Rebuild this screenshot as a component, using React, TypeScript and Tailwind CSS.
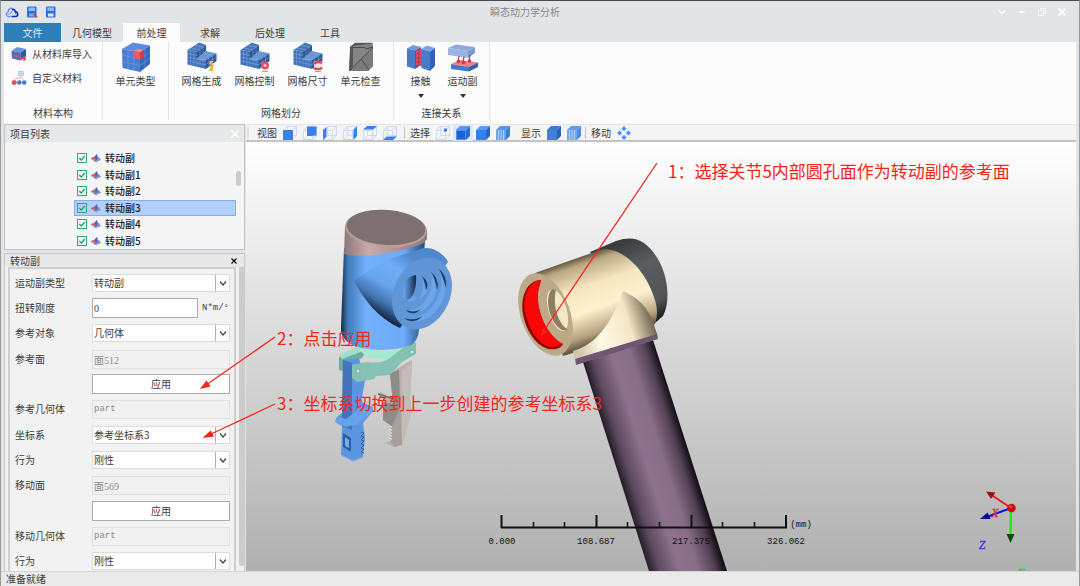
import { useState } from 'react';
import type { ReactNode } from 'react';

const menuTabs = ['几何模型', '前处理', '求解', '后处理', '工具'];
const joints = ['转动副', '转动副1', '转动副2', '转动副3', '转动副4', '转动副5'];

/* ---------- icons ---------- */

function CloudIcon() {
  return (
    <svg viewBox="0 0 14 12" className="h-3 w-[14px]" fill="none" strokeLinecap="round">
      <path d="M5 10.500H3.500C.6 10.200.6 6.800 3 6.300 3.200 1.800 7.800.8 9 4.200L11 8" stroke="#5b8bee" strokeWidth="1.300" />
      <path d="M7 10.500H10.500C13.600 10.200 13.400 6.200 10.600 5.800 10 3.800 8.500 3 7.500 3.600" stroke="#1d2f9c" strokeWidth="1.500" />
      <path d="M4 8.300 6 7M6 7 7 5" stroke="#5b8bee" strokeWidth="1" />
    </svg>
  );
}

function SaveIcon({ badge = false }: { badge?: boolean }) {
  return (
    <svg viewBox="0 0 12 12" className="size-3">
      <rect x="1" y=".5" width="9.500" height="11" rx="1" fill="#2f6ddc" />
      <rect x="2.500" y="1.500" width="6.500" height="3.500" fill="#8fb8f8" />
      <rect x="3" y="7.500" width="5.500" height="3" fill={badge ? '#7fa9f2' : '#dbe8ff'} />
      {badge && <path d="M7.500 8 11 11.300" stroke="#e2434f" strokeWidth="2" fill="none" />}
    </svg>
  );
}

function ImportIcon() {
  return (
    <svg viewBox="0 0 16 16" className="size-4">
      <path d="M.5 5 6 1 15 3 9.500 6.500Z" fill="#6d93da" />
      <path d="M.5 5 9.500 6.500V14.500L1 12.500Z" fill="#456fc0" />
      <path d="M9.500 6.500 15 3V10.500L9.500 14.500Z" fill="#2f57a5" />
      <path d="M2.500 8.500 7.500 9.500V12L2.500 11.300Z" fill="#e2505e" />
      <path d="M9 12.500h5M12.500 10.500l2 2-2 2.500" stroke="#e2505e" strokeWidth="1.400" fill="none" />
    </svg>
  );
}

function CustomIcon() {
  return (
    <svg viewBox="0 0 16 16" className="size-4">
      <path d="M7.500 1.500h5v4h-5zM10 2v3M8 3.500h4" stroke="#9cc4ee" fill="#e2f0fd" strokeWidth=".8" />
      <path d="M10 6 8.500 9M10 7l3 2.500M8 8 3.500 9.500" stroke="#e39aa2" strokeWidth=".8" />
      <circle cx="3.200" cy="12.500" r="2.500" fill="#d95866" />
      <circle cx="8.300" cy="12.500" r="2.300" fill="#4b7bcd" />
      <circle cx="13.200" cy="12.500" r="2.300" fill="#4b7bcd" />
    </svg>
  );
}

function UnitIcon() {
  return (
    <svg viewBox="0 0 30 30" className="size-[30px]">
      <path d="M1 7 12 .5 29 3.500 19 10Z" fill="#5d8bdb" />
      <path d="M1 7 19 10V30L1.500 26Z" fill="#4c7dd0" />
      <path d="M19 10 29 3.500V22L19 30Z" fill="#3a67b6" />
      <path d="M7 8V27M13 9V28.500M1 13 19 17M1 19.500 19 23.500M19 17 29 10M19 23.500 29 16M24 7v19" stroke="#7ba3e4" strokeWidth=".5" fill="none" />
      <path d="M13 9 17 7 23 8 19 10.300Z" fill="#f58a8f" />
      <path d="M13 9 19 10.300V17.500L13 16.500Z" fill="#ee5662" />
      <path d="M19 10.300 23 8V14.500L19 17.500Z" fill="#cf3b49" />
    </svg>
  );
}

function MeshIcon({ children }: { children: ReactNode }) {
  return (
    <svg viewBox="0 0 30 30" className="size-[30px]">
      <path d="M.5 8 12 .5 19 3 10 9.500Z" fill="#4677bb" />
      <path d="M.5 8 10 9.500V17L19 18V27L.5 22.500Z" fill="#3d6eb6" />
      <path d="M10 9.500 19 3V9L10 17Z" fill="#2c5598" />
      <path d="M10 17 19 9 29.500 11.500 19 18Z" fill="#6893d0" />
      <path d="M19 18 29.500 11.500V19L19 27Z" fill="#2d5699" />
      <path d="M3.600 8.500v14.500M6.800 9v15M10 17v7.500M13 17.300v8M16 17.600v8.500M.5 11.600l9.500 1.900M.5 15.200l9.500 1.900 9 2M.5 18.800l18.500 4.200M13 7.500v7M16 5.300v6M22 16.500v8M25.500 14v8M13 17.300l9-7.300M16 17.600l10-7M19 22.500l10.500-7.500M4 6l9 1.800M8 3.300l9 2" stroke="#8db2e6" strokeWidth=".5" fill="none" />
      {children}
    </svg>
  );
}

function CheckUnitIcon() {
  return (
    <svg viewBox="0 0 30 30" className="size-[30px]">
      <path d="M4 5 9 .8H27L22 5Z" fill="#555" />
      <path d="M5 4 27 1.500V24L22 29H3Z" fill="#858585" />
      <path d="M4 5 7 2.500V24L3 29Z" fill="#555" />
      <path d="M3 29 27 6V24L22 29Z" fill="#7b7b7b" />
      <path d="M3 29 27 5.500M15 17 23 28M7 5.500H19L20 7 27 5" stroke="#4a4a4a" strokeWidth="1" fill="none" />
    </svg>
  );
}

function ContactIcon() {
  return (
    <svg viewBox="0 0 30 30" className="size-[30px]">
      <path d="M1 6.500 7 3 15 5 9 8.500Z" fill="#7099dd" />
      <path d="M1 6.500 9 8.500V27L1 24.500Z" fill="#4a79c9" />
      <path d="M9 8.500 15 5V23L9 27Z" fill="#3563b0" />
      <path d="M10 8h8v17l-8-2Z" fill="#d64c5d" />
      <path d="M12.500 8v15.500M10 12h7M10 16h7M10 20h7" stroke="#b03347" strokeWidth=".7" />
      <path d="M15 7 21 3.500 29 6 24 9.500Z" fill="#7ba4e8" />
      <path d="M15 7 24 9.500V29L15.500 26Z" fill="#4a7acb" />
      <path d="M24 9.500 29 6V24L24 29Z" fill="#3461b1" />
    </svg>
  );
}

function MotionIcon() {
  return (
    <svg viewBox="0 0 30 30" className="size-[30px]">
      <path d="M0 6 8 2.500 27 5 20 9Z" fill="#8ea9dd" />
      <path d="M0 6 20 9V16L0 13Z" fill="#9db1e2" />
      <path d="M20 9 27 5V11L20 16Z" fill="#7d99d2" />
      <path d="M3 22 12 18 30 20.500 21 25Z" fill="#f27d84" />
      <path d="M3 22 21 25V29.500L3 27Z" fill="#4678cc" />
      <path d="M21 25 30 20.500V25L21 29.500Z" fill="#3562b2" />
      <path d="M11 14 10 19M16 14.500 15 20M22 13 21 19" stroke="#b43a4c" strokeWidth="1.200" />
      <circle cx="10.500" cy="19.500" r="1.800" fill="#c9374a" />
      <circle cx="15.500" cy="20.500" r="1.800" fill="#c9374a" />
      <circle cx="21.500" cy="19" r="1.800" fill="#c9374a" />
    </svg>
  );
}

function ViewCube({ face, line = '#c9dcfb' }: { face: string; line?: string }) {
  return (
    <svg viewBox="0 0 14 14" className="size-[14px]">
      <path d="M.5 4.500 4.500.5H13.500V9.500L9.500 13.500H.5ZM.5 4.500H9.500V13.500M9.500 4.500 13.500.5M4.500.5V9.500H13.500M4.500 9.500.5 13.500" fill="none" stroke={line} />
      <path d={face} fill="#397fee" />
    </svg>
  );
}

function SolidCube({ front, side, top, lines, dashed }: { front: string; side: string; top: string; lines?: boolean; dashed?: boolean }) {
  return (
    <svg viewBox="0 0 14 14" className="size-[14px]">
      <path d="M0 4 4 0H14L10 4Z" fill={top} />
      <path d="M0 4H10V14H0Z" fill={front} />
      <path d="M10 4 14 0V10L10 14Z" fill={side} />
      {lines && <path d="M2.500 4v10M5 4v10M7.500 4v10" stroke="#c2d9fb" strokeWidth=".8" />}
      {dashed && <path d="M.5 4.500H9.500V13.500H.5Z" fill="none" stroke="#a9cbff" strokeWidth=".8" strokeDasharray="1 1" />}
    </svg>
  );
}

function MoveIcon() {
  return (
    <svg viewBox="0 0 14 14" className="size-[14px]" fill="#4b8df3">
      <path d="M7 0 9.800 3H8.500V4.500H5.500V3H4.200ZM7 14 9.800 11H8.500V9.500H5.500V11H4.200ZM0 7 3 4.200V5.500H4.500V8.500H3V9.800ZM14 7 11 4.200V5.500H9.500V8.500H11V9.800Z" />
    </svg>
  );
}

function JointIcon() {
  return (
    <svg viewBox="0 0 10 10" className="size-[10px] shrink-0">
      <path d="M2 5 6 .8 7.500 7 3 8.500Z" fill="#7385c6" />
      <path d="M4.500 3.500 8 4 10 7 5.500 8.800Z" fill="#8b93c9" />
      <path d="M4 3.500 6 1.500 6.500 6.500 4.500 7Z" fill="#4f63ae" />
      <path d="M0 5 2.800 3.800 3.800 5.200 1 7Z" fill="#d2596c" />
      <path d="M2.500 7.500 6 9" stroke="#c08092" />
    </svg>
  );
}

/* ---------- ribbon ---------- */

function RibbonButton({ icon, label, menu }: { icon: ReactNode; label: string; menu?: boolean }) {
  return (
    <button className="flex flex-col items-center">
      {icon}
      <span className="mt-px leading-4">{label}</span>
      {menu && (
        <svg viewBox="0 0 6 4" className="mt-[5px] h-1 w-[6px]">
          <path d="M0 0H6L3 4Z" fill="#333" />
        </svg>
      )}
    </button>
  );
}

function RibbonGroup({ title, className, children }: { title?: string; className: string; children: ReactNode }) {
  return (
    <section className={`mb-1 flex flex-col justify-between border-r border-[#e2e2e2] ${className}`}>
      {children}
      {title && <h2 className="text-center leading-[14px]">{title}</h2>}
    </section>
  );
}

function Ribbon() {
  return (
    <div className="flex h-[82px] shrink-0 bg-[#fcfcfc]">
      <RibbonGroup title="材料本构" className="w-[99px]">
        <div className="flex flex-col gap-2 pt-1 pl-[7px]">
          <button className="flex items-center gap-[5px] leading-4"><ImportIcon />从材料库导入</button>
          <button className="flex items-center gap-[5px] leading-4"><CustomIcon />自定义材料</button>
        </div>
      </RibbonGroup>
      <RibbonGroup className="w-[66px] items-center">
        <RibbonButton icon={<UnitIcon />} label="单元类型" />
      </RibbonGroup>
      <RibbonGroup title="网格划分" className="w-[225px]">
        <div className="flex justify-center gap-[13px]">
          <RibbonButton
            label="网格生成"
            icon={<MeshIcon><path d="M22.500 19h4l-1 3.500H27l-1.500 5h1v1.500h-4.500l2-6.500h-2z" fill="#e9b93b" /></MeshIcon>}
          />
          <RibbonButton
            label="网格控制"
            icon={
              <MeshIcon>
                <circle cx="25" cy="23.500" r="4" fill="#e84e5c" />
                <circle cx="25" cy="23.500" r="1.500" fill="#ffc3c8" />
                <path d="M22 29.300h6" stroke="#777" strokeWidth=".8" />
              </MeshIcon>
            }
          />
          <RibbonButton
            label="网格尺寸"
            icon={
              <MeshIcon>
                <path d="M20.500 19.500h9v8.500h-8z" fill="#f7dfe2" />
                <path d="M21 22c2-2.500 6-2 8-1M29 25.500c-2 2.500-6 2-8 .5" stroke="#e33f4f" strokeWidth="2.200" fill="none" />
                <path d="M22 29.300h6" stroke="#777" strokeWidth=".8" />
              </MeshIcon>
            }
          />
          <RibbonButton icon={<CheckUnitIcon />} label="单元检查" />
        </div>
      </RibbonGroup>
      <RibbonGroup title="连接关系" className="w-24">
        <div className="flex justify-center gap-3">
          <RibbonButton icon={<ContactIcon />} label="接触" menu />
          <RibbonButton icon={<MotionIcon />} label="运动副" menu />
        </div>
      </RibbonGroup>
    </div>
  );
}

/* ---------- left side ---------- */

function ProjectTree() {
  const [selected, setSelected] = useState('转动副3');
  return (
    <section className="flex h-[126px] shrink-0 flex-col border border-[#bfc2c6] bg-[#f5f5f5]">
      <header className="flex h-[17px] items-center justify-between bg-[#e6e8ea] px-[5px]">
        <h2>项目列表</h2>
        <button aria-label="关闭">
          <svg viewBox="0 0 8 8" className="size-2"><path d="M0 0 8 8M8 0 0 8" stroke="#fff" strokeWidth="1.500" /></svg>
        </button>
      </header>
      <div className="flex flex-1 pt-2">
        <ul className="ml-[69px] flex flex-1 flex-col">
          {joints.map((name) => (
            <li
              key={name}
              onClick={() => setSelected(name)}
              className={`flex flex-1 items-center border pl-[2px] ${
                name === selected ? 'border-[#86aee8] bg-[#b3cffc]' : 'border-transparent'
              }`}
            >
              <label className="flex items-center gap-1 font-medium leading-[14px] text-[#222]">
                <span className="relative flex size-[10px]">
                  <input
                    type="checkbox"
                    defaultChecked
                    className="peer size-[10px] appearance-none border border-[#2bab78]"
                  />
                  <svg viewBox="0 0 10 10" className="pointer-events-none absolute inset-0 hidden peer-checked:block">
                    <path d="M2.300 5 4.300 7 7.800 3" stroke="#1fa36c" strokeWidth="1.400" fill="none" />
                  </svg>
                </span>
                <JointIcon />
                {name}
              </label>
            </li>
          ))}
        </ul>
        <div className="w-2 pt-[21px]">
          <div className="h-[15px] w-[5px] rounded-sm bg-[#cbcbcb]" />
        </div>
      </div>
    </section>
  );
}

function Row({ id, label, children }: { id?: string; label?: string; children: ReactNode }) {
  return (
    <div className="flex h-5 items-center">
      <label htmlFor={id} className="w-[77px] shrink-0">{label}</label>
      {children}
    </div>
  );
}

function SelectRow({ id, label, value }: { id: string; label: string; value: string }) {
  return (
    <Row id={id} label={label}>
      <div className="relative flex h-[18px] flex-1 border border-[#dcdcdc] bg-white">
        <select id={id} className="min-w-0 flex-1 appearance-none bg-transparent pl-px leading-4 outline-none">
          <option>{value}</option>
        </select>
        <span className="pointer-events-none absolute inset-y-0 right-0 flex w-[14px] items-center justify-center border-l border-[#b0b0b0]">
          <svg viewBox="0 0 8 5" className="h-[5px] w-2"><path d="M1 .5 4 4 7 .5" stroke="#444" strokeWidth="1.200" fill="none" /></svg>
        </span>
      </div>
    </Row>
  );
}

function ReadonlyRow({ id, label, value, latin }: { id: string; label: string; value: string; latin?: boolean }) {
  return (
    <Row id={id} label={label}>
      <input
        id={id}
        readOnly
        value={value}
        className={`h-[19px] min-w-0 flex-1 border border-[#e0e0e0] bg-[#f1f1f1] px-px text-[#8c8c8c] outline-none ${
          latin
            ? "font-['Liberation_Mono','Noto_Sans_CJK_SC',monospace] text-[9px]"
            : "font-['Liberation_Serif','Noto_Sans_CJK_SC',serif]"
        }`}
      />
    </Row>
  );
}

function ApplyRow() {
  return (
    <Row>
      <button className="h-5 flex-1 border border-[#adadad] bg-white leading-4">应用</button>
    </Row>
  );
}

function JointPanel() {
  const [stiffness, setStiffness] = useState('0');
  return (
    <section className="flex min-h-0 flex-1 flex-col border border-b-0 border-[#c6c8ca] bg-[#f0f0f0]">
      <header className="flex h-[13px] shrink-0 items-center justify-between bg-[#e6e8ea] pr-[7px] pl-[5px]">
        <h2 className="leading-3">转动副</h2>
        <button aria-label="关闭">
          <svg viewBox="0 0 6 6" className="size-[6px]"><path d="M.5.5 5.500 5.500M5.500.5.5 5.500" stroke="#111" strokeWidth="1.300" /></svg>
        </button>
      </header>
      <div className="flex min-h-0 flex-1 pl-[3px]">
        <form
          onSubmit={(e) => e.preventDefault()}
          className="flex min-w-0 flex-1 flex-col gap-[6px] overflow-hidden border-2 border-b-0 border-[#cfcfcf] bg-[#f2f2f2] pt-[4px] pr-1 pl-[5px]"
        >
          <div className="flex flex-col gap-[5px]">
            <SelectRow id="type" label="运动副类型" value="转动副" />
            <Row id="stiffness" label="扭转刚度">
              <input
                id="stiffness"
                value={stiffness}
                onChange={(e) => setStiffness(e.target.value)}
                className="h-5 w-[106px] border border-[#adadad] bg-white px-px font-['Liberation_Serif',serif] outline-none"
              />
              <span className="ml-1 font-['Liberation_Mono',monospace] text-[9px]">N*m/°</span>
            </Row>
            <SelectRow id="target" label="参考对象" value="几何体" />
          </div>
          <div className="flex flex-col gap-[5px]">
            <ReadonlyRow id="refFace" label="参考面" value="面512" />
            <ApplyRow />
            <ReadonlyRow id="refPart" label="参考几何体" value="part" latin />
          </div>
          <div className="flex flex-col gap-[5px]">
            <SelectRow id="csys" label="坐标系" value="参考坐标系3" />
            <SelectRow id="refMode" label="行为" value="刚性" />
            <ReadonlyRow id="movFace" label="移动面" value="面569" />
          </div>
          <div className="flex flex-col gap-[5px]">
            <ApplyRow />
            <ReadonlyRow id="movPart" label="移动几何体" value="part" latin />
            <SelectRow id="movMode" label="行为" value="刚性" />
          </div>
        </form>
        <div className="ml-[3px] w-[5px] pb-[5px]">
          <div className="h-full rounded-b-sm bg-[#cccccc]" />
        </div>
      </div>
    </section>
  );
}

/* ---------- viewport ---------- */

const viewFaces = [
  { name: '前视', face: 'M0 4H10V14H0Z' },
  { name: '后视', face: 'M4 .5H13.500V9.500H4ZM4 9.500H10V10H4Z' },
  { name: '左视', face: 'M0 4 3.500 1V10.500L0 14Z' },
  { name: '右视', face: 'M10.500 4 14 0V10L10.500 14Z' },
  { name: '俯视', face: 'M0 3.500 4 0H14L10 3.500Z' },
  { name: '仰视', face: 'M0 14 4 10.500H14L10 14Z' },
];

function ToolButton({ name, active, children }: { name: string; active?: boolean; children: ReactNode }) {
  return (
    <button aria-label={name} className={`flex h-4 w-5 items-center justify-center ${active ? 'bg-[#dce8fb]' : ''}`}>
      {children}
    </button>
  );
}

function ViewToolbar() {
  return (
    <div className="flex h-[18px] shrink-0 items-center border-t border-b-2 border-t-[#e6e6e6] border-b-[#c4c4c4] bg-[#f4f4f4]">
      <span className="mr-2 ml-px h-3 w-[2px] bg-[#e2e2e2]" />
      <span className="mr-[3px]">视图</span>
      {viewFaces.map((v) => (
        <ToolButton key={v.name} name={v.name}><ViewCube face={v.face} /></ToolButton>
      ))}
      <span className="mx-[4px] h-3 w-px bg-[#c2c2c2]" />
      <span className="mr-[3px] ml-px">选择</span>
      <ToolButton name="选择点"><ViewCube face="M8 2.500H11V5.500H8Z" /></ToolButton>
      <ToolButton name="选择面" active><SolidCube front="#1c62d2" side="#2a6ad0" top="#5a97f4" dashed /></ToolButton>
      <ToolButton name="选择体"><SolidCube front="#397fee" side="#2465cf" top="#5e9bf8" /></ToolButton>
      <ToolButton name="选择单元"><SolidCube front="#6da2f0" side="#397ce0" top="#5b95ea" lines /></ToolButton>
      <span className="mr-[3px] ml-2">显示</span>
      <ToolButton name="实体"><SolidCube front="#4480dc" side="#2c61b8" top="#3d78d4" /></ToolButton>
      <ToolButton name="网格"><SolidCube front="#74a6ef" side="#4f8ae2" top="#629aec" lines /></ToolButton>
      <span className="mr-[5px] ml-px h-3 w-px bg-[#c2c2c2]" />
      <span className="mr-[3px]">移动</span>
      <ToolButton name="移动"><MoveIcon /></ToolButton>
    </div>
  );
}

function Gripper() {
  return (
    <g>
      {/* right finger */}
      <path d="M390 373 412 360 410 400 412 410 402 445 394 447 385 443 390 441 390 425 383 420V399L378 394 380 392 393 399Z" fill="#b7b1ae" />
      <path d="M390 373 399 370 402 445 394 447 390 441 390 425 383 420V402L393 404Z" fill="#a5a09d" />
      <path d="M390 373 399 370 400 408 392 426 383 420V402L393 404Z" fill="#8f8b89" />
      <path d="M402 370 412 362 410 400 412 410 402 445Z" fill="#c4bcb9" />
      <path d="M378 394 394 399" stroke="#6f6a68" strokeWidth="1.500" />
      <path d="M389 426l3 1-3 2 3 1-3 2 3 1-3 2 3 1-3 2 3 1-3 2" stroke="#dcd8d6" fill="none" />
      {/* bracket */}
      <path d="M339 357 358 350 366 352 362 358 343 364 343 371 339 370Z" fill="#6eae9c" />
      <path d="M339 355 357 347 363 351 342 359Z" fill="#9ee0c9" />
      {/* left finger */}
      <path d="M343 360 359 358 365 381 361 402 373 407 373 411 363 423 365 438 363 457 353 461 341 455 342 426 335 422 337 417 342 413Z" fill="#5c96e0" />
      <path d="M343 360 352 363 352 430 342 426 342 413Z" fill="#4274bb" />
      <path d="M353 379H364L361 400 363 402 352 415Z" fill="#5b94df" />
      <path d="M335 422 337 417 346 419 360 408 373 407V411L358 424 346 427Z" fill="#69a2ec" />
      <path d="M343 433 351 438V452L343 447Z" fill="#2f5c9e" />
      <path d="M345 437 349 440V448L345 446Z" fill="#79acea" />
      <path d="M361 432l3 1-3 3 3 1-3 3 3 1-3 3 3 1-3 3 3 1-3 3 3 1" stroke="#34609f" fill="none" />
      <path d="M341 455 353 461 363 457" stroke="#79acea" fill="none" />
      <path d="M356 346Q385 356 412 345L411 350 390 360 367 358Z" fill="#a5e9cf" />
      <path d="M352 365 367 362Q382 364 390 358L405 346 416 342V354L402 362 390 375 376 376 374 379 357 382 352 378Z" fill="#86c2b3" />
      <circle cx="358" cy="371" r="2" fill="#d3eee5" stroke="#5a9686" strokeWidth=".7" />
      <circle cx="412" cy="352" r="2" fill="#d3eee5" stroke="#5a9686" strokeWidth=".7" />
      {/* body */}
      <path d="M344 248 341 328Q340 342 361 348 390 353 411 345 418 341 419 330L425 240Z" fill="url(#blueBody)" />
      <path d="M354 281C366 271 385 260 399 256L424 248C434 247 444 254 448 262L400 328C378 318 364 300 354 281Z" fill="url(#blueSide)" />
      <ellipse cx="422" cy="293.500" rx="28" ry="37.500" transform="rotate(25 422 293.500)" fill="#6096d5" />
      {/* stepped bore */}
      <path d="M439 269C450 280 447 300 434 313 425 322 412 324 404 318 414 320 424 316 431 308 441 297 444 282 439 269Z" fill="#6ba5ec" />
      <path d="M439 269C445 274 447 281 446 288 444 281 442 275 439 269ZM404 318C410 320 417 320 422 316 418 322 410 323 404 318Z" fill="#1f3d66" />
      <path d="M431 272C440 282 438 297 428 306 421 313 411 315 406 310 414 311 421 307 425 301 432 291 433 281 431 272Z" fill="#6ba5ec" />
      <path d="M431 272C437 277 439 284 437 290 436 283 434 277 431 272ZM406 310C411 312 417 312 421 309 417 314 410 315 406 310Z" fill="#1f3d66" />
      <path d="M422 276C430 284 428 296 419 299 423 291 424 284 422 276Z" fill="#6ba5ec" />
      <path d="M422 276C427 280 429 285 426 290 425 284 424 280 422 276Z" fill="#1f3d66" />
      <path d="M416 275C402 276 400 295 406 302 413 299 417 287 416 275Z" fill="url(#boreBlue)" />
      <path d="M404 298C408 303 414 302 417 298L414 296 408 300Z" fill="#6ba5ec" />
      {/* cap */}
      <path d="M345 226 344 254Q356 257 376 255 402 252 424 243L427 239V230Z" fill="url(#capSide)" />
      <ellipse cx="386" cy="228.500" rx="41" ry="18.500" transform="rotate(4 386 228)" fill="#bda1a0" />
      <ellipse cx="386" cy="227.500" rx="39.500" ry="17.500" transform="rotate(4 386 227.500)" fill="#7e7071" />
    </g>
  );
}

function ArmJoint() {
  return (
    <g>
      <path d="M583 362 653 340 727 571H649Z" fill="url(#tube)" />
      <path d="M575 358 657 333 658 339 576 365Z" fill="#6f5774" />
      <path d="M590 252 616 241C634 235 645 240 656 256 668 273 671 301 663 316L655 323Z" fill="url(#darkCap)" />
      <path d="M535 273 603 249C628 249 648 276 655 300 659 314 656 320 655 324L630 335 563 356Z" fill="url(#tanBody)" />
      <path d="M573 351C597 344 611 324 623 291 641 299 650 310 656 331L657 334 575 359Z" fill="url(#branch)" />
      <ellipse cx="545.500" cy="314.500" rx="24.500" ry="43" transform="rotate(-20 545.500 314.500)" fill="#bda988" />
      <path d="M541 280C527 280 520 297 523 314 527 336 542 352 556 349Q561 348 563 344C548 337 536 312 538 292Z" fill="#8c0805" />
      <path d="M541 280C529 281 522 297 525 312 530 334 542 348 554 347L563 344C548 337 536 312 538 292Z" fill="#fb0606" />
      <ellipse cx="557.500" cy="310" rx="9" ry="21.500" transform="rotate(-17 557.500 310)" fill="#f3e7c7" />
      <path d="M552 289C544 297 549 323 562 330L568 330C556 322 553 302 556 290Z" fill="#8c7d63" />
    </g>
  );
}

function Scene() {
  return (
    <svg viewBox="246 142 829 429" preserveAspectRatio="xMinYMin meet" className="absolute inset-0 size-full overflow-visible">
      <defs>
        <linearGradient id="blueBody">
          <stop offset="0" stopColor="#142a44" />
          <stop offset=".08" stopColor="#4179b8" />
          <stop offset=".3" stopColor="#73b1fb" />
          <stop offset=".75" stopColor="#6cabf8" />
          <stop offset="1" stopColor="#244a78" />
        </linearGradient>
        <linearGradient id="blueSide" gradientUnits="userSpaceOnUse" x1="404" y1="252" x2="370" y2="310">
          <stop offset="0" stopColor="#4f88cc" />
          <stop offset=".25" stopColor="#6eacf7" />
          <stop offset=".55" stopColor="#69a6f0" />
          <stop offset=".8" stopColor="#4273b0" />
          <stop offset="1" stopColor="#14263f" />
        </linearGradient>
        <linearGradient id="boreBlue">
          <stop offset="0" stopColor="#70aaf0" />
          <stop offset=".5" stopColor="#3e70ac" />
          <stop offset="1" stopColor="#14263e" />
        </linearGradient>
        <linearGradient id="capSide">
          <stop offset="0" stopColor="#8f7777" />
          <stop offset=".3" stopColor="#c9abaa" />
          <stop offset="1" stopColor="#8f7979" />
        </linearGradient>
        <linearGradient id="tube" gradientUnits="userSpaceOnUse" x1="583" y1="364" x2="653" y2="342">
          <stop offset="0" stopColor="#1f1823" />
          <stop offset=".15" stopColor="#5c495e" />
          <stop offset=".42" stopColor="#8e728d" />
          <stop offset=".66" stopColor="#886d87" />
          <stop offset=".88" stopColor="#524153" />
          <stop offset="1" stopColor="#171219" />
        </linearGradient>
        <linearGradient id="darkCap" gradientUnits="userSpaceOnUse" x1="625" y1="240" x2="668" y2="315">
          <stop offset="0" stopColor="#3a3c3e" />
          <stop offset=".35" stopColor="#5b5e61" />
          <stop offset=".8" stopColor="#505255" />
          <stop offset="1" stopColor="#1b1b1b" />
        </linearGradient>
        <linearGradient id="tanBody" gradientUnits="userSpaceOnUse" x1="570" y1="259" x2="600" y2="346">
          <stop offset="0" stopColor="#544934" />
          <stop offset=".1" stopColor="#bba783" />
          <stop offset=".34" stopColor="#f6e6c1" />
          <stop offset=".6" stopColor="#fff1cf" />
          <stop offset=".85" stopColor="#b3a17e" />
          <stop offset="1" stopColor="#463d2c" />
        </linearGradient>
        <linearGradient id="branch" gradientUnits="userSpaceOnUse" x1="578" y1="352" x2="656" y2="328">
          <stop offset="0" stopColor="#d3c5a4" />
          <stop offset=".3" stopColor="#fffbe6" />
          <stop offset=".7" stopColor="#f3e6c6" />
          <stop offset="1" stopColor="#6c6049" />
        </linearGradient>
        <clipPath id="frame"><path d="M246 142H1075V571H246Z" /></clipPath>
      </defs>

      <Gripper />
      <ArmJoint />

      {/* scale bar */}
      <path d="M501 527.500H787" stroke="#111" strokeWidth="2" />
      <path d="M501.500 515V528M596.500 515V528M691.500 515V528M786 515V528" stroke="#111" strokeWidth="2" />
      <path d="M533.500 522V528M564.500 522V528M627.500 522V528M659.500 522V528M722.500 522V528M754.500 522V528" stroke="#111" strokeWidth="1.500" />
      <g fill="#111" textAnchor="middle" className="font-['Liberation_Mono',monospace] text-[9px]">
        <text x="502" y="544">0.000</text>
        <text x="596" y="544">108.687</text>
        <text x="691" y="544">217.375</text>
        <text x="786" y="544">326.062</text>
        <text x="801" y="527">(mm)</text>
      </g>

      {/* axis triad */}
      <path d="M1011 508 990 494" stroke="#f01818" strokeWidth="2" />
      <path d="M986 491.500 995.500 492.500 991 499Z" fill="#9c1010" />
      <path d="M1011 508 988 516.500" stroke="#1010f0" strokeWidth="2" />
      <path d="M980 519 987.500 512.500 990.500 519Z" fill="#0a0a9c" />
      <path d="M1011 508 1010.500 536" stroke="#12f012" strokeWidth="2.400" />
      <path d="M1006.500 534H1014.500L1010.500 543Z" fill="#0b4a0b" />
      <circle cx="1011.500" cy="508" r="4.300" fill="#cf0d0d" />
      <circle cx="1010.500" cy="506.500" r="1.600" fill="#f43a3a" />
      <g textAnchor="middle" clipPath="url(#frame)" className="font-['Liberation_Serif',serif] text-[12px] italic">
        <text x="995" y="517" fill="#e02828" stroke="#e02828" strokeWidth=".3">X</text>
        <text x="982" y="549" fill="#3a34d8" stroke="#3a34d8" strokeWidth=".3">Z</text>
        <text x="1021" y="577" fill="#1fd01f" stroke="#1fd01f" strokeWidth=".3">Y</text>
      </g>

      {/* annotations */}
      <g fill="#f5251c" stroke="none" className="text-[17px]">
        <text x="668" y="178">1：选择关节5内部圆孔面作为转动副的参考面</text>
        <text x="277" y="345">2：点击应用</text>
        <text x="277" y="410">3：坐标系切换到上一步创建的参考坐标系3</text>
      </g>
      <g stroke="#f5251c" strokeWidth="1.300" fill="#f5251c">
        <path d="M657 163 545 329" />
        <path d="M541 336 542.500 328 547.500 331.500Z" stroke="none" />
        <path d="M275 337 206 385" />
        <path d="M201.500 388 206.500 381.500 209.500 386Z" />
        <path d="M275 404 209 435" />
        <path d="M204.500 437 210.500 431.500 213 436Z" />
      </g>
    </svg>
  );
}

export default function App() {
  const [tab, setTab] = useState('前处理');
  return (
    <div className="flex h-screen flex-col overflow-hidden border-t border-r border-l border-t-[#4a4a4e] border-r-[#9a9a9a] border-l-[#9a9a9a] bg-[#e1e5e8] font-['Noto_Sans_CJK_SC',sans-serif] text-[10px] leading-[14px] text-[#3c3c3c]">
      <div className="flex h-[22px] shrink-0 items-center">
        <div className="flex w-[60px] items-center gap-[7px] pl-1">
          <CloudIcon />
          <SaveIcon badge />
          <SaveIcon />
        </div>
        <h1 className="flex-1 text-center text-[#85888b]">瞬态动力学分析</h1>
        <div className="flex w-[90px] items-center gap-3 pl-[9px]">
          <button aria-label="折叠"><svg viewBox="0 0 8 8" className="size-2"><path d="M1 2.500 4 5.500 7 2.500" stroke="#fff" strokeWidth="1.300" fill="none" /></svg></button>
          <button aria-label="最小化"><svg viewBox="0 0 8 8" className="size-2"><path d="M1.500 4H6.500" stroke="#fff" strokeWidth="1.600" /></svg></button>
          <button aria-label="还原"><svg viewBox="0 0 8 8" className="size-2"><path d="M.5 2.500H5.500V7.500H.5ZM2.500 2.500V.5H7.500V5.500H5.500" stroke="#f6f7f8" strokeWidth=".8" fill="none" /></svg></button>
          <button aria-label="关闭"><svg viewBox="0 0 8 8" className="size-2"><path d="M.5.5 7.500 7.500M7.500.5.5 7.500" stroke="#fff" strokeWidth="1.800" /></svg></button>
        </div>
      </div>

      <div className="flex min-h-0 flex-1 flex-col px-[3px]">
        <nav className="flex h-[19px] shrink-0">
          <button className="w-[57px] bg-[#2e7eb8] text-[#e4f1fa]">文件</button>
          {menuTabs.map((name) => (
            <button
              key={name}
              onClick={() => setTab(name)}
              className={`${name === '几何模型' ? 'w-[62px]' : name === '前处理' ? 'w-[57px]' : 'w-[60px]'} ${
                name === tab ? 'bg-[#fcfcfc]' : ''
              }`}
            >
              {name}
            </button>
          ))}
        </nav>
        <Ribbon />

        <main className="flex min-h-0 flex-1">
          <aside className="flex w-[241px] shrink-0 flex-col gap-[3px]">
            <ProjectTree />
            <JointPanel />
          </aside>
          <div className="flex min-w-0 flex-1 flex-col pl-px">
            <ViewToolbar />
            <div className="relative z-10 flex-1 bg-linear-to-b from-white to-[#b0b0b0]">
              <Scene />
            </div>
          </div>
        </main>
      </div>

      <footer className="flex h-[15px] shrink-0 items-center border-t border-[#d5d5d5] bg-[#eaeaea] pl-[5px]">准备就绪</footer>
    </div>
  );
}
